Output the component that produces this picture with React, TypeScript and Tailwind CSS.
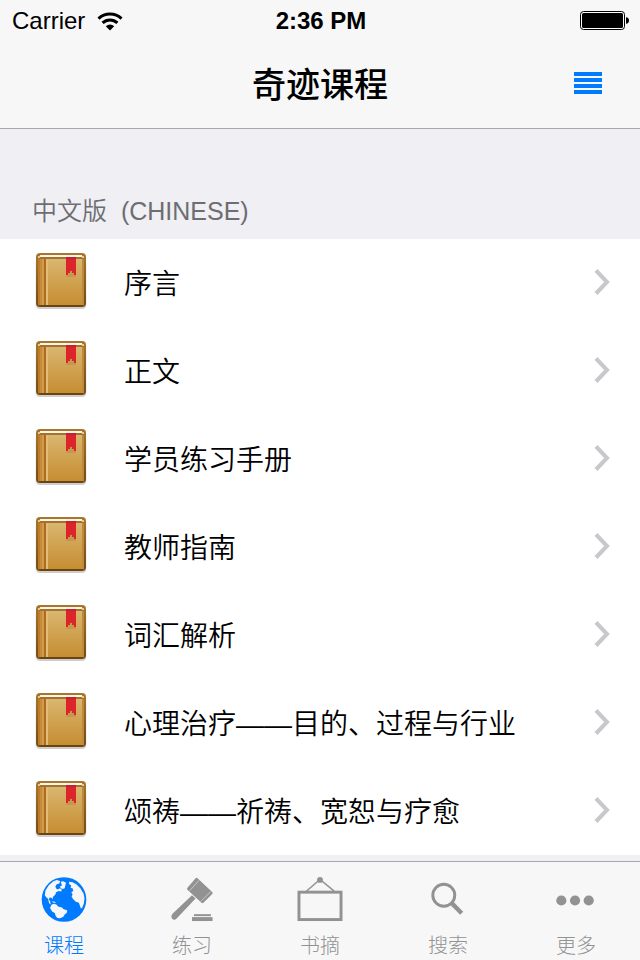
import React from "react";

const courses: string[] = [
  "序言",
  "正文",
  "学员练习手册",
  "教师指南",
  "词汇解析",
  "心理治疗——目的、过程与行业",
  "颂祷——祈祷、宽恕与疗愈",
];

function WifiIcon() {
  return (
    <svg width="26" height="19" viewBox="0 0 26 19" aria-hidden="true">
      <g fill="none" stroke="#000" strokeWidth="3">
        <path d="M1.5 6.6a16.6 16.6 0 0 1 23 0" />
        <path d="M5.6 10.9a10.6 10.6 0 0 1 14.8 0" />
      </g>
      <path d="M8.8 14.2a6 6 0 0 1 8.4 0L13 18.4z" />
    </svg>
  );
}

function BatteryIcon() {
  return (
    <svg width="50" height="20" viewBox="0 0 50 20" aria-hidden="true">
      <rect x="0.5" y="0.5" width="44" height="18" rx="3" fill="#fff" stroke="#000" />
      <rect x="2" y="2" width="41" height="15" rx="1.5" />
      <path d="M46 6.2c2 0 3 1.4 3 3.3s-1 3.3-3 3.3z" />
    </svg>
  );
}

function BookIcon() {
  return (
    <svg className="shrink-0" width="54" height="64" viewBox="0 0 54 64" aria-hidden="true">
      <defs>
        <linearGradient id="cover" x1="0" y1="0" x2="0" y2="1">
          <stop offset="0" stopColor="#d9b670" />
          <stop offset="0.5" stopColor="#d0a250" />
          <stop offset="1" stopColor="#c68d33" />
        </linearGradient>
        <linearGradient id="edge" x1="0" y1="0" x2="0" y2="1">
          <stop offset="0" stopColor="#ab762b" />
          <stop offset="1" stopColor="#744b13" />
        </linearGradient>
      </defs>
      <rect x="1" y="8" width="52" height="50" rx="5" fill="#000" opacity="0.05" />
      <rect x="2" y="6" width="50" height="52" rx="4" fill="#000" opacity="0.15" />
      <rect x="2" y="2" width="50" height="54" rx="4" fill="url(#edge)" />
      <rect x="6" y="4" width="42" height="2" fill="#faf5e9" />
      <path d="M4 5h2v2H4zM48 5h2v2h-2z" fill="#e2c894" />
      <rect x="4" y="8" width="46" height="46" rx="1" fill="url(#cover)" />
      <rect x="4" y="8" width="2" height="46" fill="#bd7c2a" />
      <rect x="6" y="8" width="2" height="46" fill="#c78a38" />
      <rect x="8" y="8" width="2" height="46" fill="#d09b4b" />
      <rect x="10" y="8" width="2" height="46" fill="#ad6c20" />
      <rect x="12" y="8" width="2" height="46" fill="#e1bd78" />
      <rect x="48" y="8" width="2" height="46" fill="#bc8a3a" />
      <rect x="32" y="8" width="10" height="18" fill="#8c5b18" opacity="0.2" />
      <path d="M32 6h10v18h-2v-2h-2v-2h-2v2h-2v2h-2z" fill="#dc252b" />
      <path d="M32 6h10v2H32z" fill="#c4222a" />
      <rect x="6" y="54" width="42" height="2" fill="#6b450f" />
    </svg>
  );
}

function Chevron() {
  return (
    <svg className="shrink-0" width="18" height="30" viewBox="0 0 18 30" fill="none" aria-hidden="true">
      <path d="M2 2.500L13 14L2 25.500" stroke="#c7c7cc" strokeWidth="4" />
    </svg>
  );
}

function GlobeIcon() {
  return (
    <svg width="46" height="46" viewBox="0 0 136 136" aria-hidden="true">
      <circle cx="68" cy="68" r="67.5" fill="#007aff" />
      <g fill="#f7f7f7">
        <path d="M46 9L36 13L22 25L12 41L10 55L15 62L20 66L23 79L28 83L26 73L22 67L25 62L31 63L33 68L35 60L42 53L44 46L52 42L60 44L61 38L55 34L50 38L44 35L42 28L46 22L54 20L56 12Z" />
        <path d="M58 14L66 13L74 17L72 26L70 34L64 36L58 34L56 28L62 26Z" />
        <path d="M30 84L38 81L46 84L50 89L62 92L66 97L78 101L76 109L70 113L66 120L56 125L48 124L43 118L40 109L32 104L26 94Z" />
        <path d="M83 14L94 16L106 23L118 35L127 50L130 64L128 80L123 93L119 95L113 78L104 75L96 67L91 60L94 52L90 46L96 42L94 34L88 33L90 26L84 22Z" />
        <path d="M31 73L40 75L44 78L36 78Z" />
      </g>
    </svg>
  );
}

function GavelIcon() {
  return (
    <svg width="46" height="46" viewBox="0 0 138 138" fill="#929292" aria-hidden="true">
      <path d="M80 4Q83 1 86 4L131 46Q134 49 131 52L104 79Q101 82 98 79L55 39Q52 36 55 33Z" />
      <path d="M91 10L62 42M127 44L96 75" stroke="#f7f7f7" strokeWidth="2" opacity="0.8" />
      <path d="M69 56L80 66L22 127Q15 134 8 128Q3 120 10 112Z" />
      <rect x="75" y="114" width="52" height="6" />
      <rect x="69" y="123" width="63" height="12" />
    </svg>
  );
}

function FrameIcon() {
  return (
    <svg width="46" height="46" viewBox="0 0 46 46" aria-hidden="true">
      <g fill="none" stroke="#929292">
        <path d="M9 14.500L23 2.500L37.500 14.500" strokeWidth="1.500" />
        <rect x="1.500" y="15.500" width="43" height="28" strokeWidth="3" />
      </g>
      <circle cx="23" cy="3" r="3" fill="#929292" />
    </svg>
  );
}

function SearchIcon() {
  return (
    <svg width="46" height="46" viewBox="0 0 46 46" fill="none" stroke="#929292" aria-hidden="true">
      <circle cx="18.700" cy="18.700" r="11.200" strokeWidth="3" />
      <path d="M26.500 26.500L37 37" strokeWidth="4.500" />
    </svg>
  );
}

function MoreIcon() {
  return (
    <svg width="46" height="46" viewBox="0 0 46 46" fill="#929292" aria-hidden="true">
      <circle cx="8" cy="24" r="5.200" />
      <circle cx="22" cy="24" r="5.200" />
      <circle cx="36" cy="24" r="5.200" />
    </svg>
  );
}

const tabs = [
  { label: "课程", Icon: GlobeIcon, active: true },
  { label: "练习", Icon: GavelIcon, active: false },
  { label: "书摘", Icon: FrameIcon, active: false },
  { label: "搜索", Icon: SearchIcon, active: false },
  { label: "更多", Icon: MoreIcon, active: false },
];

export default function App() {
  return (
    <div className="flex min-h-screen flex-col bg-[#efeff4] font-['Liberation_Sans','Noto_Sans_CJK_SC',sans-serif] text-black">
      <header className="border-b border-[#a7a7aa] bg-[#f7f7f7]">
        <div className="grid h-[42px] grid-cols-3 items-center pr-2.5 pl-3 text-2xl">
          <div className="flex items-center gap-3">
            <span>Carrier</span>
            <WifiIcon />
          </div>
          <time className="text-center font-bold">2:36 PM</time>
          <div className="flex justify-end">
            <BatteryIcon />
          </div>
        </div>
        <div className="grid h-[86px] grid-cols-[1fr_auto_1fr] items-center px-8 pb-1">
          <span />
          <h1 className="pt-1 text-[34px] leading-10 font-medium">奇迹课程</h1>
          <button type="button" aria-label="菜单" className="flex w-10 flex-col items-center gap-0.5 justify-self-end py-2">
            <span className="h-1 w-7 bg-[#007aff]" />
            <span className="h-1 w-7 bg-[#007aff]" />
            <span className="h-1 w-7 bg-[#007aff]" />
            <span className="h-1 w-7 bg-[#007aff]" />
          </button>
        </div>
      </header>

      <main className="flex-1">
        <h2 className="flex h-[110px] items-end px-8 pb-3 text-[25px] leading-8 font-[350] whitespace-pre text-[#6d6d72]">
          {"中文版  (CHINESE)"}
        </h2>
        <ul className="bg-white">
          {courses.map((name) => (
            <li key={name}>
              <a href="#" className="flex h-22 items-center gap-9 pr-7 pl-[34px]">
                <BookIcon />
                <span className="flex-1 pt-1 text-[28px] leading-10 font-[350]">{name}</span>
                <Chevron />
              </a>
            </li>
          ))}
        </ul>
      </main>

      <nav className="grid grid-cols-5 border-t border-[#a7a7aa] bg-[#f7f7f7]">
        {tabs.map(({ label, Icon, active }) => (
          <button
            key={label}
            type="button"
            aria-current={active ? "page" : undefined}
            className={`flex h-[98px] flex-col items-center gap-2.5 pt-[15px] text-xl leading-7 font-light ${
              active ? "text-[#007aff]" : "text-[#929292]"
            }`}
          >
            <Icon />
            <span>{label}</span>
          </button>
        ))}
      </nav>
    </div>
  );
}
